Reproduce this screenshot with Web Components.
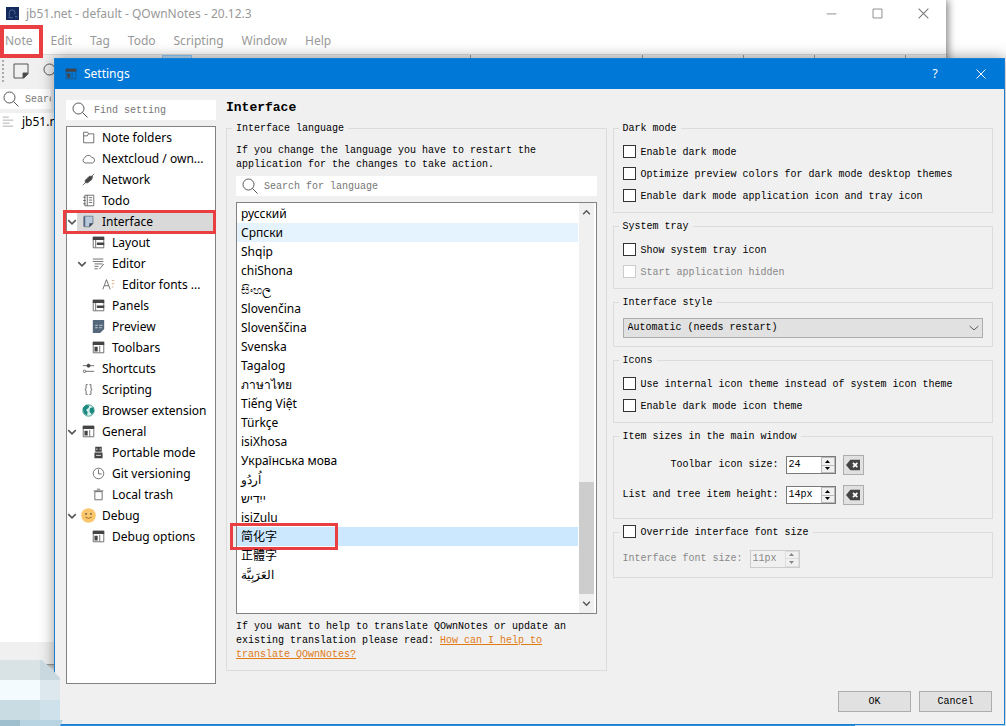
<!DOCTYPE html>
<html lang="en">
<head>
<meta charset="utf-8">
<title>QOwnNotes - Settings</title>
<style>
    html, body {
        height: 100%;
        margin: 0;
    }
    body {
        --ui: "Noto Sans", "Noto Sans CJK SC", sans-serif;
        --mono: "Liberation Mono", monospace;
        --mark: #e93e42;
        font: 10px/14px var(--mono);
        color: #000;
        background: #fff;
    }
</style>
</head>
<body>
<desk-top>
    <main-window></main-window>
    <settings-dialog></settings-dialog>
</desk-top>

<script>
const icons = {
    search: '<circle cx="6.5" cy="6.5" r="5.5"/><path d="M10.5 10.5L15.5 15.5"/>',
    folder: '<path d="M2 14.500V1.500H7L8 3.500H14.500V14.500Z M2 6H6.500L8 3.500"/>',
    cloud: '<path d="M4 13.500A3.200 3.200 0 0 1 3 7.500A5 5 0 0 1 12 6.500A3.600 3.600 0 0 1 13 13.500Z"/>',
    network: '<path d="M1 15L5 11M11 5L15 1"/><path fill="#444" d="M4 9L9 4L13 4L12 8L7 12L4 12Z"/>',
    todo: '<path d="M3.500 1.500H14.500V14.500H3.500ZM6.500 1.500V14.500M8.500 4.500H12.500M8.500 7.500H12.500M8.500 10.500H12.500M1.500 4H4.500M1.500 8H4.500M1.500 12H4.500"/>',
    note: '<path fill="#b8c9db" stroke="#6a7686" d="M2.500 1.500H13.500V10L9.500 14.500H2.500Z"/><path fill="#3c4450" stroke="none" d="M9 15V10H14Z"/><path stroke="#4e6480" stroke-width="2" d="M3 2V14"/>',
    layout: '<path d="M1.500 1.500H14.500V14.500H1.500Z"/><path fill="#444" stroke="none" d="M1 1H15V5H1ZM6 8H15V11H6Z"/><path d="M4.500 5V14"/>',
    editor: '<path d="M1 2.500H14M1 5.500H14M3 8.500H13M3 11.500H8M3 14.500H7M9 15L14.500 8.500"/>',
    fonts: '<path d="M1 14L5.500 2L10 14M3 9.500H8"/><path stroke="#d99a6b" d="M12 3H15M12 7H15M12 11H14"/>',
    preview: '<path fill="#55677b" stroke="none" d="M1 0H15V11L10 16H1Z"/><path stroke="#dbe4ec" d="M4 6.500H7M4 9.500H7M9 6.500H13M9 9.500H12"/>',
    toolbar: '<path d="M1.500 1.500H14.500V14.500H1.500Z"/><path fill="#444" stroke="none" d="M1 1H15V5H1ZM3 7H7V13H3Z"/><path d="M9.500 6V14"/>',
    shortcuts: '<path d="M1 4.500H15M4 11.500H15"/><circle cx="8" cy="4.500" r="2" fill="#444"/><circle cx="3" cy="11.500" r="1.500"/>',
    script: '<path d="M7 2H5V7L3.500 8L5 9V14H7M9 2H11V7L12.500 8L11 9V14H9"/>',
    globe: '<circle cx="8" cy="8" r="7" fill="#d3efe9" stroke="#2d8f86"/><path fill="#1b8880" stroke="none" d="M1 5L5 1L9 2L8 5L5 7L7 10L6 14L2 11ZM10 5L14 4L15 9L12 13L9 9Z"/>',
    portable: '<path fill="#444" stroke="none" d="M4 1H12V7H4ZM3 8H13V15H3Z"/><path stroke="#fff" d="M6 3V5M10 3V5M5 11.500H11"/>',
    clock: '<circle cx="8" cy="8" r="6.500"/><path d="M8 3V8.500H12"/>',
    trash: '<path d="M3.500 4.500H12.500V14.500H3.500ZM2 3.500H14M6 1.500H10"/>',
    smile: '<circle cx="8" cy="8" r="9" fill="#fbc76d" stroke="none"/><circle cx="5" cy="6" r="1" fill="#444" stroke="none"/><circle cx="11" cy="6" r="1" fill="#444" stroke="none"/><path stroke="#8a5a20" d="M4 10Q8 13 12 10"/>',
    chevron: '<path stroke-width="2.5" d="M2 5L8 11L14 5"/>',
    drop: '<path stroke-width="1.5" d="M1 5L8 11L15 5"/>',
    up: '<path stroke-width="2.5" d="M2 11L8 5L14 11"/>',
    erase: '<path fill="#444" stroke="none" d="M0 8L5 2H16V14H5Z"/><path stroke="#fff" stroke-width="2" d="M8 5.500L13 10.500M13 5.500L8 10.500"/>',
    close: '<path stroke-width="1.3" d="M2 2L14 14M14 2L2 14"/>',
    minimize: '<path d="M2 8.500H14"/>',
    maximize: '<path d="M2.500 2.500H13.500V13.500H2.500Z"/>',
    page: '<path d="M1 1H15V11L11 15H1Z"/><path fill="#444" d="M10 15V10H15Z"/>',
    lines: '<path stroke="#999" d="M1 1.500H9M1 5.500H15M1 9.500H10M1 13.500H15"/>',
    logo: '<path fill="#152a5c" stroke="none" d="M0 0H16V16H0Z"/><path stroke="#5873a8" d="M4 12V7A3 3 0 0 1 11 7V9M3 13H8M11 12H14"/>'
};

// Small helper: every element gets an open shadow root filled from its template.
function define(name, html, setup) {
    const template = document.createElement('template');
    template.innerHTML = html;
    customElements.define(name, class extends HTMLElement {
        constructor() {
            super();
            this.attachShadow({ mode: 'open' });
            this.shadowRoot.appendChild(template.content.cloneNode(true));
        }
        connectedCallback() {
            if (setup) setup(this, this.shadowRoot);
        }
    });
}

define('ui-icon', `
    <style>
        :host { display: block; flex: none; width: 12px; height: 12px; color: #555; }
        svg { display: block; width: 100%; height: 100%; fill: none; stroke: currentColor; overflow: visible; }
    </style>
    <svg viewBox="0 0 16 16" aria-hidden="true"></svg>
`, (el, root) => {
    root.querySelector('svg').innerHTML = icons[el.getAttribute('name')];
});

define('search-field', `
    <style>
        :host { display: block; background: #fff; }
        label { display: flex; align-items: center; gap: 6px; height: 20px; padding-left: 6px; }
        ui-icon { width: 16px; height: 16px; }
        input {
            flex: 1; min-width: 0; height: 18px; padding: 0; border: 0; outline: 0;
            background: none; font: inherit;
        }
        input::placeholder { color: #777; opacity: 1; }
    </style>
    <label><ui-icon name="search"></ui-icon><input type="text"></label>
`, (el, root) => {
    const input = root.querySelector('input');
    input.placeholder = el.getAttribute('placeholder');
    input.setAttribute('aria-label', input.placeholder);
});

define('group-box', `
    <style>
        :host { display: flex; flex-direction: column; }
        fieldset {
            flex: 1; display: flex; flex-direction: column; min-width: 0;
            margin: 0; padding: 6px 9px 5px; border: 1px solid #dcdcdc;
        }
        legend { height: 14px; margin-left: -4px; padding: 0 4px; line-height: 16px; }
    </style>
    <fieldset>
        <legend><slot name="legend"></slot></legend>
        <slot></slot>
    </fieldset>
`);

define('check-option', `
    <style>
        :host { display: block; }
        label { display: flex; align-items: center; gap: 5px; height: 22px; }
        :host([slot]) label { height: 14px; }
        input {
            appearance: none; flex: none; width: 13px; height: 13px; margin: 0 0 1px;
            border: 1px solid #333; background: #fff;
        }
        input:checked { background: #0078d7; }
        span { padding-top: 2px; line-height: 14px; }
        :host([disabled]) { color: #888; }
        input:disabled { border-color: #ccc; }
    </style>
    <label><input type="checkbox"><span><slot></slot></span></label>
`, (el, root) => {
    root.querySelector('input').disabled = el.hasAttribute('disabled');
});

define('spin-box', `
    <style>
        :host { display: block; width: 50px; }
        div { display: flex; height: 18px; box-sizing: border-box; border: 1px solid #7a7a7a; background: #fff; }
        input {
            flex: 1; min-width: 0; padding: 0 0 0 2px; border: 0; outline: 0;
            background: none; color: inherit; font: inherit;
        }
        span { display: flex; flex-direction: column; width: 14px; }
        button {
            flex: 1; display: flex; align-items: center; justify-content: center;
            padding: 0; border: 1px solid #bbb; background: #f0f0f0; color: inherit;
        }
        button + button { border-top: 0; }
        svg { width: 5px; height: 3px; fill: currentColor; }
        :host([disabled]) { color: #888; }
        :host([disabled]) div { border-color: #ccc; background: #f0f0f0; }
        :host([disabled]) button { border-color: #ddd; }
    </style>
    <div>
        <input type="text">
        <span>
            <button aria-label="Increase"><svg viewBox="0 0 5 3"><path d="M0 3L2.500 0L5 3Z"/></svg></button>
            <button aria-label="Decrease"><svg viewBox="0 0 5 3"><path d="M0 0L2.500 3L5 0Z"/></svg></button>
        </span>
    </div>
`, (el, root) => {
    const input = root.querySelector('input');
    input.value = el.getAttribute('value');
    input.setAttribute('aria-label', el.getAttribute('label'));
    root.querySelectorAll('input, button').forEach(n => n.disabled = el.hasAttribute('disabled'));
});

define('tree-item', `
    <style>
        :host { display: flex; align-items: center; height: 21px; position: relative; }
        :host([level="1"]) { padding-left: 10px; }
        :host([level="2"]) { padding-left: 20px; }
        .arrow { display: flex; align-items: center; width: 10px; height: 21px; margin-right: 4px; }
        .arrow ui-icon { width: 10px; height: 10px; visibility: hidden; }
        :host([open]) .arrow ui-icon { visibility: visible; }
        .icon { display: flex; width: 14px; justify-content: center; margin-right: 7px; }
        .icon ui-icon { width: 13px; height: 13px; }
        .text { white-space: nowrap; }
        :host([selected]) { background: linear-gradient(90deg, #fff 10px, #d9d9d9 10px); }
        :host([selected])::after {
            content: ""; position: absolute; inset: -1px -1px -2px -4px; border: 3px solid var(--mark);
        }
    </style>
    <span class="arrow"><ui-icon name="chevron"></ui-icon></span>
    <span class="icon"></span>
    <span class="text"><slot></slot></span>
`, (el, root) => {
    const icon = document.createElement('ui-icon');
    icon.setAttribute('name', el.getAttribute('icon'));
    root.querySelector('.icon').replaceChildren(icon);
});

define('settings-tree', `
    <style>
        :host {
            display: block; box-sizing: border-box; border: 1px solid #828282;
            background: #fff; font: 12px/20px var(--ui);
        }
    </style>
    <nav aria-label="Settings pages"><slot></slot></nav>
`);

define('language-list', `
    <style>
        :host {
            display: flex; box-sizing: border-box; border: 1px solid #828282;
            background: #fff; font: 12px/19px var(--ui);
        }
        ul { flex: 1; margin: 0; padding: 1px 0; list-style: none; }
        li { position: relative; height: 19px; padding-left: 4px; white-space: nowrap; }
        .hover { background: #e5f3ff; }
        .selected { background: #cce8ff; }
        .selected::after {
            content: ""; position: absolute; left: -7px; top: -4px; width: 102px; height: 21px;
            border: 3px solid var(--mark);
        }
        .bar {
            display: flex; flex-direction: column; align-items: center; width: 15px;
            margin: 0 2px 0 1px; background: #f0f0f0;
        }
        .bar ui-icon { width: 9px; height: 9px; margin: 5px 0; }
        .track { flex: 1; display: flex; flex-direction: column; justify-content: flex-end; align-self: stretch; }
        .thumb { height: 30%; background: #cdcdcd; }
    </style>
    <ul role="listbox" aria-label="Interface language"></ul>
    <div class="bar">
        <ui-icon name="up"></ui-icon>
        <div class="track"><div class="thumb"></div></div>
        <ui-icon name="chevron"></ui-icon>
    </div>
`, (el, root) => {
    const names = ['русский', 'Српски', 'Shqip', 'chiShona', 'සිංහල', 'Slovenčina', 'Slovenščina',
        'Svenska', 'Tagalog', 'ภาษาไทย', 'Tiếng Việt', 'Türkçe', 'isiXhosa', 'Українська мова',
        'اُردُو', 'ייִדיש', 'isiZulu', '简化字', '正體字', 'العَرَبِيَّة'];
    root.querySelector('ul').replaceChildren(...names.map(name => {
        const li = document.createElement('li');
        li.setAttribute('role', 'option');
        li.textContent = name;
        if (name === 'Српски') li.className = 'hover';
        if (name === '简化字') li.className = 'selected';
        return li;
    }));
});

define('main-window', `
    <style>
        :host { display: flex; flex-direction: column; background: #fff; font: 12px/18px var(--ui); color: #999; }
        header { display: flex; align-items: center; height: 27px; padding-left: 6px; }
        header > ui-icon { width: 13px; height: 13px; margin-right: 7px; }
        header span { flex: 1; }
        header button { width: 46px; height: 27px; padding: 0; border: 0; background: none; display: grid; place-items: center; }
        header button ui-icon { width: 13px; height: 13px; color: #777; }
        nav { display: flex; align-items: center; gap: 18px; height: 27px; padding-left: 5px; }
        nav a { color: inherit; text-decoration: none; }
        nav a:first-child { position: relative; }
        nav a:first-child::after { content: ""; position: absolute; inset: -7px -11px -8px -5px; border: 4px solid var(--mark); }
        .tools {
            display: flex; align-items: center; gap: 14px; height: 32px; padding-left: 2px;
            border-top: 1px solid #ddd; background: #f0f0f0;
        }
        .grip { height: 22px; border-left: 2px dotted #aaa; margin-right: -5px; }
        .tools ui-icon { width: 16px; height: 16px; }
        .hot { align-self: stretch; width: 30px; margin-left: 89px; background: #bcdcf4; border: 1px solid #90c8f6; box-sizing: border-box; }
        .groups { align-self: stretch; flex: 1; display: grid; grid-template-columns: 26fr 17fr 10fr 7fr 9fr 4fr; }
        .groups i + i { border-left: 1px solid #999; }
        search-field { width: 54px; margin: 2px 0 4px; font: 10px/14px var(--mono); margin-left: -3px; }
        .notes { flex: 1; width: 54px; overflow: hidden; background: #fff; color: #000; }
        .note { display: flex; align-items: center; gap: 8px; padding-left: 2px; white-space: nowrap; }
        .left { flex: 1; display: flex; flex-direction: column; background: #f0f0f0; }
        footer { height: 22px; background: #f0f0f0; border-bottom: 1px solid #999; }
    </style>
    <header>
        <ui-icon name="logo"></ui-icon>
        <span>jb51.net - default - QOwnNotes - 20.12.3</span>
        <button aria-label="Minimize"><ui-icon name="minimize"></ui-icon></button>
        <button aria-label="Maximize"><ui-icon name="maximize"></ui-icon></button>
        <button aria-label="Close"><ui-icon name="close"></ui-icon></button>
    </header>
    <nav>
        <a href="#">Note</a><a href="#">Edit</a><a href="#">Tag</a><a href="#">Todo</a>
        <a href="#">Scripting</a><a href="#">Window</a><a href="#">Help</a>
    </nav>
    <div class="tools">
        <div class="grip"></div>
        <ui-icon name="page"></ui-icon><ui-icon name="search"></ui-icon>
        <div class="hot"></div>
        <div class="groups"><i></i><i></i><i></i><i></i><i></i><i></i></div>
    </div>
    <div class="left">
        <search-field placeholder="Search"></search-field>
        <div class="notes"><div class="note"><ui-icon name="lines"></ui-icon>jb51.net</div></div>
    </div>
    <footer></footer>
`);

define('settings-dialog', `
    <style>
        :host {
            display: flex; flex-direction: column; box-sizing: border-box;
            border: 1px solid #1a7fd0; background: #f0f0f0;
            box-shadow: 0 0 14px rgba(0, 0, 0, .4);
        }
        header {
            display: flex; align-items: center; height: 30px; padding-left: 10px;
            background: #0078d7; color: #fff; font: 12px/18px var(--ui);
        }
        header > ui-icon { color: #24527e; margin-right: 7px; }
        header span { flex: 1; }
        header button {
            display: grid; place-items: center; width: 46px; height: 30px;
            padding: 0; border: 0; background: none; color: #fff; font: inherit;
        }
        header button ui-icon { color: #fff; }
        main {
            flex: 1; display: grid; grid-template-columns: 150px minmax(0, 1fr);
            column-gap: 10px; padding: 11px 11px 7px;
        }
        aside { display: flex; flex-direction: column; gap: 6px; }
        settings-tree { flex: 1; }
        section { display: flex; flex-direction: column; padding-bottom: 13px; }
        h1 { margin: 0 0 6px; font: bold 13px/15px var(--mono); }
        .columns { flex: 1; display: grid; grid-template-columns: 1fr 1fr; gap: 6px; }
        .column { display: flex; flex-direction: column; gap: 6px; }
        .column > .fill { flex: 1; }
        p { margin: 3px 0 4px; }
        p + search-field { margin-bottom: 6px; }
        language-list { flex: 1; }
        language-list + p { margin: 6px 0 3px; }
        p a { color: #e07b16; }
        select {
            appearance: none; width: 100%; height: 20px; margin: 3px 0; padding: 0 4px;
            border: 1px solid #adadad; border-radius: 0; font: inherit; color: #000;
            background: #e1e1e1;
        }
        .combo { display: grid; align-items: center; }
        .combo > * { grid-area: 1 / 1; }
        .combo ui-icon { justify-self: end; width: 10px; height: 10px; margin-right: 4px; pointer-events: none; }
        .sizes {
            display: grid; grid-template-columns: repeat(3, max-content); grid-auto-rows: 30px;
            align-items: center; column-gap: 7px; padding: 1px 0 3px;
        }
        .sizes span { text-align: right; }
        .sizes button {
            display: grid; place-items: center; width: 21px; height: 20px; padding: 0;
            border: 1px solid #adadad; background: #e1e1e1;
        }
        .sizes ui-icon { width: 14px; height: 14px; }
        .font-size { display: flex; align-items: center; gap: 7px; height: 27px; color: #888; }
        footer { display: flex; justify-content: flex-end; gap: 8px; padding: 0 12px 12px; }
        footer button {
            width: 73px; height: 21px; padding: 0; border: 1px solid #adadad;
            background: #e1e1e1; color: #000; font: inherit;
        }
    </style>
    <header>
        <ui-icon name="toolbar"></ui-icon>
        <span>Settings</span>
        <button>?</button>
        <button aria-label="Close"><ui-icon name="close"></ui-icon></button>
    </header>
    <main>
        <aside>
            <search-field placeholder="Find setting"></search-field>
            <settings-tree>
                <tree-item icon="folder">Note folders</tree-item>
                <tree-item icon="cloud">Nextcloud / own...</tree-item>
                <tree-item icon="network">Network</tree-item>
                <tree-item icon="todo">Todo</tree-item>
                <tree-item icon="note" open selected>Interface</tree-item>
                <tree-item icon="layout" level="1">Layout</tree-item>
                <tree-item icon="editor" level="1" open>Editor</tree-item>
                <tree-item icon="fonts" level="2">Editor fonts ...</tree-item>
                <tree-item icon="layout" level="1">Panels</tree-item>
                <tree-item icon="preview" level="1">Preview</tree-item>
                <tree-item icon="toolbar" level="1">Toolbars</tree-item>
                <tree-item icon="shortcuts">Shortcuts</tree-item>
                <tree-item icon="script">Scripting</tree-item>
                <tree-item icon="globe">Browser extension</tree-item>
                <tree-item icon="toolbar" open>General</tree-item>
                <tree-item icon="portable" level="1">Portable mode</tree-item>
                <tree-item icon="clock" level="1">Git versioning</tree-item>
                <tree-item icon="trash" level="1">Local trash</tree-item>
                <tree-item icon="smile" open>Debug</tree-item>
                <tree-item icon="toolbar" level="1">Debug options</tree-item>
            </settings-tree>
        </aside>
        <section>
            <h1>Interface</h1>
            <div class="columns">
                <div class="column">
                    <group-box class="fill">
                        <span slot="legend">Interface language</span>
                        <p>If you change the language you have to restart the application for the changes to take action.</p>
                        <search-field placeholder="Search for language"></search-field>
                        <language-list></language-list>
                        <p>If you want to help to translate QOwnNotes or update an existing translation please read: <a href="#">How can I help to translate QOwnNotes?</a></p>
                    </group-box>
                </div>
                <div class="column">
                    <group-box>
                        <span slot="legend">Dark mode</span>
                        <check-option>Enable dark mode</check-option>
                        <check-option>Optimize preview colors for dark mode desktop themes</check-option>
                        <check-option>Enable dark mode application icon and tray icon</check-option>
                    </group-box>
                    <group-box>
                        <span slot="legend">System tray</span>
                        <check-option>Show system tray icon</check-option>
                        <check-option disabled>Start application hidden</check-option>
                    </group-box>
                    <group-box>
                        <span slot="legend">Interface style</span>
                        <div class="combo">
                            <select aria-label="Interface style"><option>Automatic (needs restart)</option></select>
                            <ui-icon name="drop"></ui-icon>
                        </div>
                    </group-box>
                    <group-box>
                        <span slot="legend">Icons</span>
                        <check-option>Use internal icon theme instead of system icon theme</check-option>
                        <check-option>Enable dark mode icon theme</check-option>
                    </group-box>
                    <group-box>
                        <span slot="legend">Item sizes in the main window</span>
                        <div class="sizes">
                            <span>Toolbar icon size:</span>
                            <spin-box label="Toolbar icon size" value="24"></spin-box>
                            <button aria-label="Reset toolbar icon size"><ui-icon name="erase"></ui-icon></button>
                            <span>List and tree item height:</span>
                            <spin-box label="List and tree item height" value="14px"></spin-box>
                            <button aria-label="Reset item height"><ui-icon name="erase"></ui-icon></button>
                        </div>
                    </group-box>
                    <group-box>
                        <check-option slot="legend">Override interface font size</check-option>
                        <div class="font-size">
                            <span>Interface font size:</span>
                            <spin-box label="Interface font size" value="11px" disabled></spin-box>
                        </div>
                    </group-box>
                </div>
            </div>
        </section>
    </main>
    <footer>
        <button>OK</button>
        <button>Cancel</button>
    </footer>
`);

define('desk-top', `
    <style>
        :host {
            display: block; position: relative; min-height: 100%; overflow: hidden;
            background: #fff;
        }
        ::slotted(main-window) {
            position: absolute; inset: 0 60px 61px 0;
            box-shadow: 2px 0 8px rgba(0, 0, 0, .5);
        }
        ::slotted(settings-dialog) {
            position: relative; min-height: calc(100vh - 59px); margin: 58px 1px 0 54px;
        }
        /* keeps the top margin of the dialog inside the desktop */
        :host::before { content: ""; display: table; }
        .taskbar { height: 1px; position: relative; background: linear-gradient(90deg, #2a8fd6 85%, #b9d9f0 85%); }
        svg { position: absolute; left: 0; bottom: 0; width: 63px; height: 66px; }
    </style>
    <slot></slot>
    <div class="taskbar"></div>
    <svg viewBox="0 0 63 66" aria-hidden="true">
        <path fill="#d9e2e5" d="M0 0H42L60 18V66H0Z"/>
        <path fill="#c9d8de" d="M40 0H42L60 18V20H40Z"/>
        <path fill="#f4fbfe" d="M0 20H40V40H0Z"/>
        <path fill="#dce8ee" d="M40 20H60V40H40Z"/>
        <path fill="#cadce3" d="M0 40H40V60H0Z"/>
        <path fill="#cfe1eb" d="M40 40H60V60H40Z"/>
        <path fill="#9fbfce" d="M0 60H20V66H0Z"/>
        <path fill="#b8d4e2" d="M20 60H63L60 66H20Z"/>
    </svg>
`);
</script>
</body>
</html>
